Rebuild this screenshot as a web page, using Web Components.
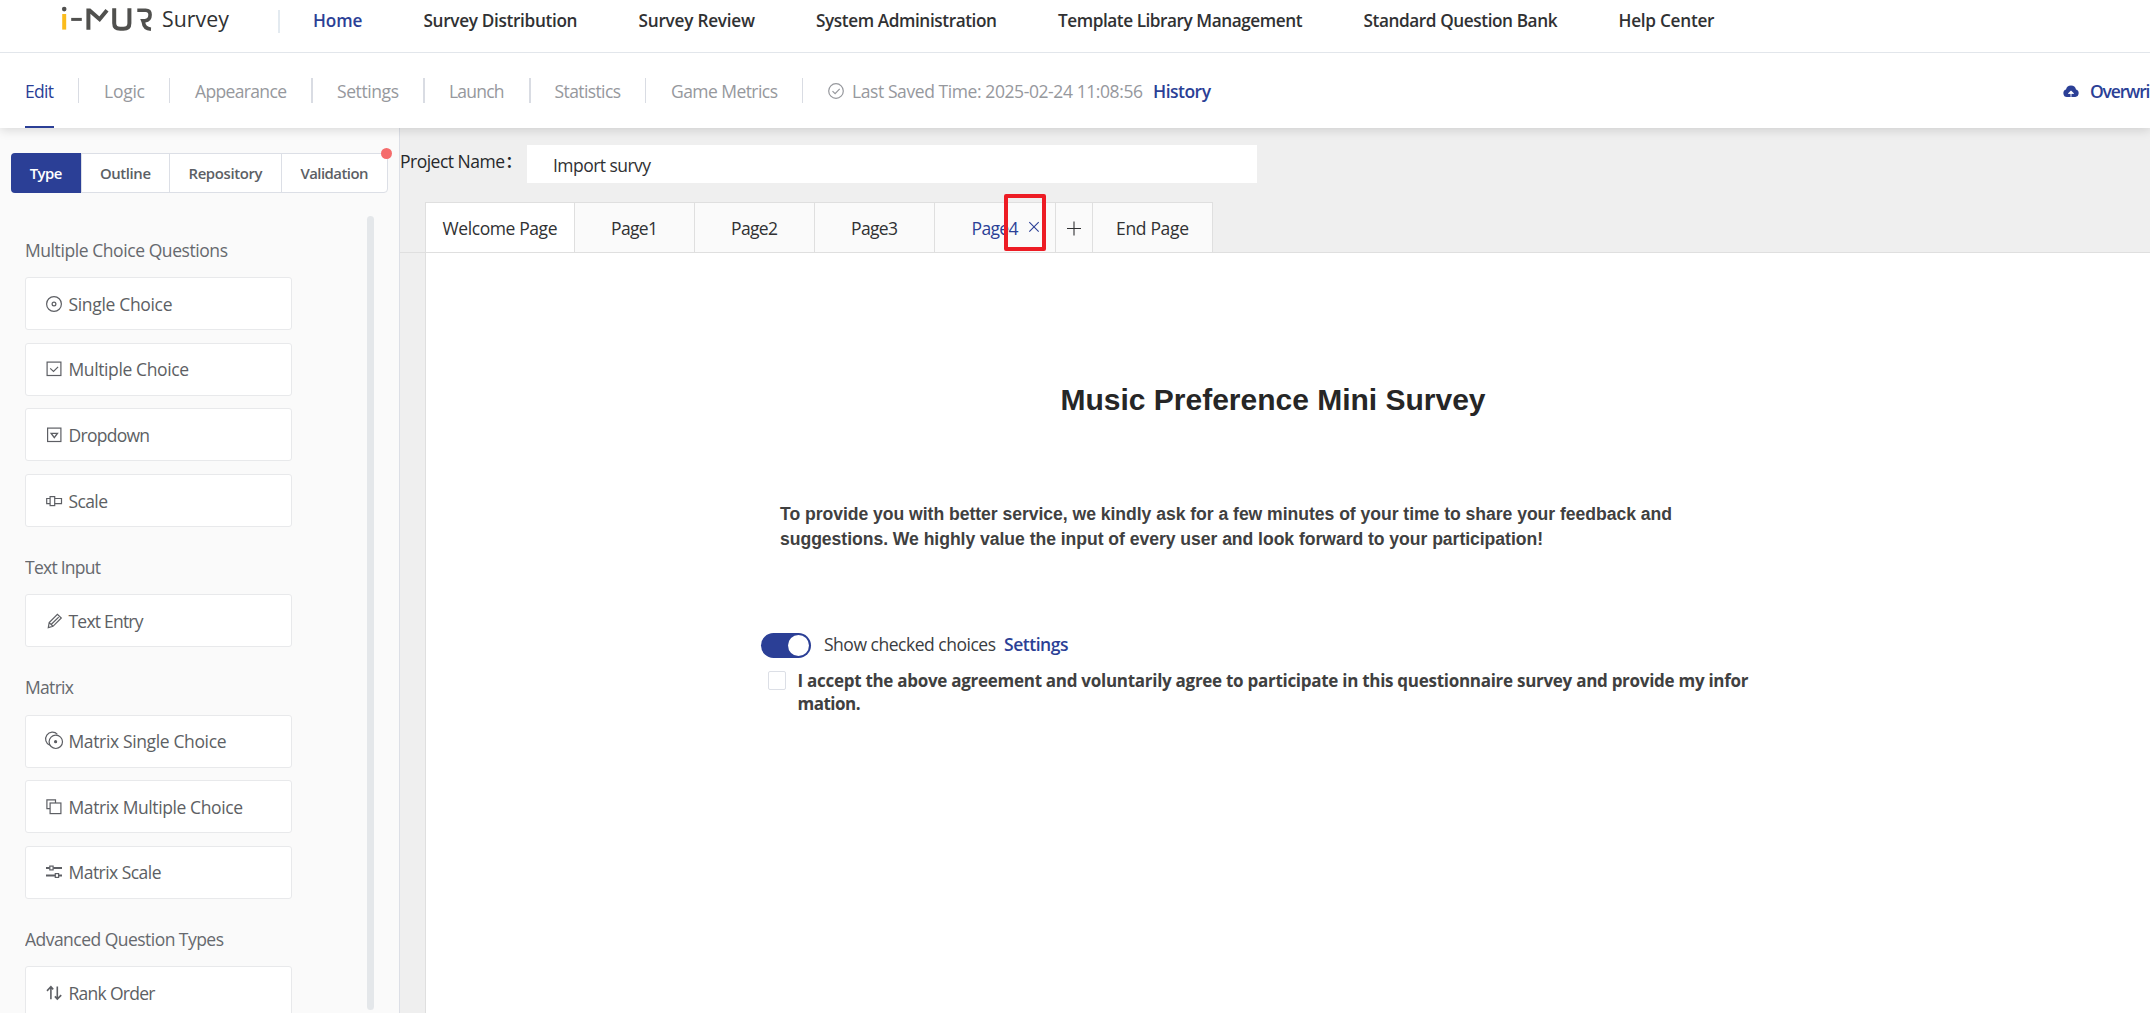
<!DOCTYPE html>
<html lang="en">
<head>
<meta charset="utf-8">
<title>i-MUR Survey</title>
<style>
html,body{margin:0;height:100%;overflow:hidden}
body{font-family:"Open Sans","Noto Sans CJK SC",sans-serif;font-size:17.5px;line-height:24px;color:#303133;background:#efefef;
--blue:#2b3f96;--muted:#96989d;--line:#dcdfe6}
</style>
</head>
<body>
<survey-app></survey-app>
<script>
const define=(name,html,setup)=>customElements.define(name,class extends HTMLElement{
  constructor(){super();this.attachShadow({mode:'open'}).innerHTML=html;}
  connectedCallback(){if(setup)setup(this,this.shadowRoot);}
});

/* A label that tracks its letters so the text fills the width given in "w". */
define('fit-text',`<style>:host{display:inline-block;white-space:nowrap;flex:none}span{display:inline-block}</style><span><slot></slot></span>`,(el,root)=>{
  const w=parseFloat(el.getAttribute('w')),s=root.querySelector('span'),n=el.textContent.length;
  el.style.width=w+'px';
  s.style.letterSpacing='0px';
  s.style.letterSpacing=((w-s.getBoundingClientRect().width)/(n-1||1))+'px';
});

const icons={
  single:'<circle cx="8" cy="8" r="7.4"/><circle cx="8" cy="8" r="1.9"/>',
  multiple:'<rect x="1.1" y="1.1" width="13.8" height="13.4"/><path d="M4.2 7.4l3.3 3 4.6-4.6"/>',
  dropdown:'<rect x="1.6" y="1.1" width="13.3" height="13.4"/><path d="M5.2 6.4h6.2L8.3 10.6z" stroke-width="1.4"/>',
  scale:'<path d="M4 5.5H.7v5.2H4M8.8 5.5h6.7v5.2H8.8"/><rect x="4.1" y="3.6" width="4.6" height="9"/>',
  pencil:'<path d="M2.3 14.6l.9-5L11.4 1.3l3.9 3.7L7 13.3zM3.2 9.6L7 13.3M5.1 11.5l7.6-7.4"/>',
  msingle:'<circle cx="9.8" cy="8.8" r="6.7"/><path d="M11.4 1.3A6.8 6.8 0 1 0 3.8 12.2"/><circle cx="9.6" cy="8.7" r="1" fill="currentColor"/>',
  mmultiple:'<path d="M4 9.6H.9V.9h8.6v3"/><rect x="4.1" y="4" width="10.8" height="10.6"/>',
  mscale:'<path d="M0 4.1h3.7M7.2 4.1H16M0 11.6h9.2M12.8 11.6H16" stroke-width="2"/><rect x="3.8" y="2.1" width="3.3" height="3.8"/><rect x="9.3" y="9.6" width="3.3" height="3.8"/>',
  rank:'<path d="M4.9 14.2V2M1 5.9L4.9 1.8 7.2 4.4M11.3 1.6v12.3M8.9 11.4l2.4 2.7 3.9-4" stroke-width="1.6"/>',
  saved:'<circle cx="8" cy="8" r="7.3"/><path d="M4.5 8.1l2.6 2.6 4.6-4.9"/>',
  plus:'<path d="M1 8.5h14M8 1.5v14" stroke-width="1.1"/>',
  close:'<path d="M3.3 3.2l9.4 9.4M12.7 3.2l-9.4 9.4" stroke-width="1.1"/>',
  cloud:'<path d="M3.9 14A3.8 3.8 0 0 1 3 6.6 5.1 5.1 0 0 1 13 6.6 3.8 3.8 0 0 1 12.3 14z" fill="currentColor" stroke="none"/><path d="M8 13.8V8.6M5.4 10.4L8 7.9l2.6 2.5z" stroke="#fff" fill="#fff" stroke-width=".9"/>'
};
define('ui-icon',`<style>:host{display:block;flex:none;width:16px;height:16px}svg{display:block;overflow:visible}</style>`,(el,root)=>{
  root.innerHTML+=`<svg width="16" height="16" viewBox="0 0 16 16" fill="none" stroke="currentColor" stroke-width="1.2">${icons[el.getAttribute('name')]}</svg>`;
});

define('brand-logo',`<style>
:host{display:flex;align-items:flex-start;color:#303133;font-size:21.3px;line-height:28px}
svg{display:block;margin-top:6px}
fit-text{margin:5px 0 0 9px}
</style>
<svg width="92" height="26" viewBox="0 0 92 26" fill="none" stroke="#50504e" stroke-width="4">
<circle cx="3.2" cy="3.1" r="2.3" fill="#50504e" stroke="none"/>
<path d="M3.2 8v15.6" stroke="#fbbc1c"/>
<path d="M10.2 13.4h10.6" stroke-width="3"/>
<path d="M27.4 23.7V4.6h1.2l10 8.6L46 4.3"/>
<path d="M53.2 2.2v15q0 5.5 6 5.5h3.2q6 0 6-5.5v-15"/>
<path d="M76.3 4.2h8.4q4.4 0 4.4 4.5 0 5.4-5 6.1h-2.2l.4 1q.7 7 7.7 7.5" stroke-width="3.6"/>
</svg><fit-text w="67">Survey</fit-text>`);

define('top-bar',`<style>
:host{display:flex;height:52px;border-bottom:1px solid #e2e6eb;background:#fff;box-sizing:content-box;padding-left:61px;align-items:flex-start;flex:none}
brand-logo{width:217px;flex:none}
i{width:2px;height:23px;background:#e3eaf0;margin-top:10px;flex:none}
nav{display:flex;gap:61px;margin:9px 0 0 33px;font-weight:600;font-size:17.2px}
.on{color:var(--blue)}
</style><brand-logo></brand-logo><i></i><nav>
<fit-text class="on" w="49.5">Home</fit-text><fit-text w="154">Survey Distribution</fit-text><fit-text w="116.5">Survey Review</fit-text><fit-text w="181">System Administration</fit-text><fit-text w="244.5">Template Library Management</fit-text><fit-text w="194">Standard Question Bank</fit-text><fit-text w="96">Help Center</fit-text></nav>`);

define('step-item',`<style>
:host{display:flex;height:75px;align-items:center;color:var(--muted);flex:none}
i{height:25px;width:1px;background:#d9dce3;margin:0 25px 0 24px}
:host([wide]) i{width:2px;margin-right:24px}
.t{display:flex;align-items:center;height:75px;padding-top:1px;box-sizing:border-box}
:host([on]){color:var(--blue)}
:host([on]) .t{border-bottom:2px solid var(--blue);padding-top:3px}
</style><div class="t"><slot></slot></div><i></i>`);

define('step-bar',`<style>
:host{display:flex;height:75px;background:#fff;box-shadow:0 2px 10px rgba(0,0,0,.14);clip-path:inset(0 0 -14px 0);z-index:2;position:relative;padding-left:25px;flex:none}
.save,.over{display:flex;align-items:center;color:var(--muted);padding-top:1px}
.save ui-icon{margin:0 8px 0 0}
.save .h{font-weight:600;color:var(--blue);margin-left:10px}
.over{margin-left:auto;color:var(--blue);font-weight:600;width:87px;overflow:hidden}
.over ui-icon{margin:0 11px 0 0}
</style>
<step-item on><fit-text w="29">Edit</fit-text></step-item>
<step-item><fit-text w="41">Logic</fit-text></step-item>
<step-item wide><fit-text w="92">Appearance</fit-text></step-item>
<step-item wide><fit-text w="62">Settings</fit-text></step-item>
<step-item wide><fit-text w="55.5">Launch</fit-text></step-item>
<step-item><fit-text w="66.5">Statistics</fit-text></step-item>
<step-item><fit-text w="107">Game Metrics</fit-text></step-item>
<div class="save"><ui-icon name="saved"></ui-icon><fit-text w="291">Last Saved Time: 2025-02-24 11:08:56</fit-text><fit-text class="h" w="58">History</fit-text></div>
<div class="over"><ui-icon name="cloud"></ui-icon><fit-text w="60.5">Overwri</fit-text></div>`);

define('panel-tabs',`<style>
:host{display:flex;width:377px;height:40px;box-sizing:border-box;border:1px solid var(--line);border-radius:4px;background:#fff;color:#5c5f65;font-size:14.9px;font-weight:600;position:relative}
div{display:flex;align-items:center;justify-content:center;border-left:1px solid var(--line);flex:1}
.a{background:var(--blue);color:#fff;flex:0 0 70px;border:0;margin:-1px 0 -1px -1px;border-radius:4px 0 0 4px}
.b{flex:0 0 87px}.c{flex:0 0 111px}
u{position:absolute;right:-5px;top:-6px;width:11px;height:11px;border-radius:50%;background:#f56c6c}
</style><div class="a"><fit-text w="32.5">Type</fit-text></div><div class="b"><fit-text w="51">Outline</fit-text></div><div class="c"><fit-text w="74">Repository</fit-text></div><div><fit-text w="68">Validation</fit-text></div><u></u>`);

define('type-group',`<style>
:host{display:flex;flex-direction:column;gap:12.6px;width:267px}
h3{margin:0 0 -12.6px;height:67.3px;box-sizing:border-box;padding-top:28px;font:inherit;color:#66696e}
</style><h3><slot name="title"></slot></h3><slot></slot>`);

define('type-card',`<style>
:host{display:flex;align-items:center;height:53px;box-sizing:border-box;border:1px solid #e8e9eb;border-radius:3px;background:#fff;color:#5d5f64;padding-left:20px;gap:6.5px;flex:none}
</style><ui-icon></ui-icon><slot></slot>`,(el,root)=>{
  const i=document.createElement('ui-icon');i.setAttribute('name',el.getAttribute('icon'));root.querySelector('ui-icon').replaceWith(i);
});

define('side-panel',`<style>
:host{display:flex;flex-direction:column;width:399px;border-right:1px solid var(--line);background:#fafafa;overflow:hidden;flex:none}
panel-tabs{margin:25px 0 0 11px;flex:none}
.row{display:flex;justify-content:space-between;padding:0 25px;margin-top:17px;min-height:0;flex:1}
.list{height:803px;overflow:hidden}
.bar{width:7px;height:794px;border-radius:4px;background:#e4e7ea;margin-top:6px}
</style><panel-tabs></panel-tabs><div class="row"><div class="list">
<type-group><fit-text slot="title" w="203">Multiple Choice Questions</fit-text>
<type-card icon="single"><fit-text w="104">Single Choice</fit-text></type-card>
<type-card icon="multiple"><fit-text w="120.5">Multiple Choice</fit-text></type-card>
<type-card icon="dropdown"><fit-text w="81.5">Dropdown</fit-text></type-card>
<type-card icon="scale"><fit-text w="39.5">Scale</fit-text></type-card></type-group>
<type-group><fit-text slot="title" w="76">Text Input</fit-text>
<type-card icon="pencil"><fit-text w="75">Text Entry</fit-text></type-card></type-group>
<type-group><fit-text slot="title" w="49">Matrix</fit-text>
<type-card icon="msingle"><fit-text w="158">Matrix Single Choice</fit-text></type-card>
<type-card icon="mmultiple"><fit-text w="174.5">Matrix Multiple Choice</fit-text></type-card>
<type-card icon="mscale"><fit-text w="93">Matrix Scale</fit-text></type-card></type-group>
<type-group><fit-text slot="title" w="199">Advanced Question Types</fit-text>
<type-card icon="rank"><fit-text w="87">Rank Order</fit-text></type-card></type-group>
</div><div class="bar"></div></div>`);

define('name-field',`<style>
:host{display:flex;height:38px;padding-top:17px}
label{padding-top:4px;width:127px;flex:none;white-space:nowrap;color:#26282b;display:flex;height:24px}
b{font:500 17.5px/24px "Noto Sans CJK SC",sans-serif}
div{width:704px;background:#fff;padding:8px 0 0 26px;height:30px;flex:none}
</style><label><fit-text w="105">Project Name</fit-text><b>：</b></label><div><fit-text w="98">Import survy</fit-text></div>`);

define('page-tab',`<style>
:host{display:flex;align-items:center;justify-content:center;box-sizing:border-box;height:51px;border:1px solid #dfdfdf;border-left:0;background:#fafafa;flex:none;width:120px;padding-top:1px;position:relative}
:host([on]){background:#fff}
:host([current]){color:var(--blue)}
</style><slot></slot>`);

define('page-tabs',`<style>
:host{display:flex;padding-left:25px;margin-top:19px;height:51px;border:0;background:linear-gradient(#dfdfdf,#dfdfdf) 0 100%/100% 1px no-repeat}
.w{width:150px;border-left:1px solid #dfdfdf}
.c{width:121px}.p{width:37px}
.x{position:absolute;right:13px;top:16px;width:16px;height:16px}
.mark{position:absolute;left:69px;top:-9px;width:34px;height:49px;border:4px solid #ed1c24;border-radius:2px}
</style>
<page-tab class="w" on><fit-text w="115">Welcome Page</fit-text></page-tab>
<page-tab><fit-text w="47">Page1</fit-text></page-tab>
<page-tab><fit-text w="47">Page2</fit-text></page-tab>
<page-tab><fit-text w="47">Page3</fit-text></page-tab>
<page-tab class="c" current><fit-text w="47">Page4</fit-text><ui-icon class="x" name="close"></ui-icon><span class="mark"></span></page-tab>
<page-tab class="p"><ui-icon name="plus"></ui-icon></page-tab>
<page-tab><fit-text w="73">End Page</fit-text></page-tab>`);

define('toggle-switch',`<style>
:host{display:flex;justify-content:flex-end;align-items:center;width:48px;height:25px;border-radius:13px;background:var(--blue);padding-right:2px}
i{width:21px;height:21px;border-radius:50%;background:#fff}
</style><i></i>`);

define('survey-page',`<style>
:host{display:flex;flex-direction:column;margin-left:25px;border-left:1px solid #dfdfdf;background:#fff;flex:1;padding-left:335px}
h1{margin:128px 0 0 299.5px;font:bold 30px/38px "Liberation Sans",Arial,sans-serif;color:#262626}
.p{margin:83px 0 0 19px;display:flex;flex-direction:column;font:bold 17.6px/25px "Liberation Sans",Arial,sans-serif;color:#404040}
.s{display:flex;align-items:center;margin-top:81px;height:25px;color:#3a3c40}
.s .t{margin:-3px 8px 0 13px}.s .l{margin-top:-3px;color:var(--blue);font-weight:600}
.a{display:flex;margin:11px 0 0 7px;gap:11.5px}
.a i{width:16px;height:17px;border:1px solid var(--line);border-radius:2px;flex:none;margin-top:2px}
.a div{display:flex;flex-direction:column;font-weight:700;font-size:17px;line-height:23px;color:#404040}
</style>
<h1><fit-text w="425">Music Preference Mini Survey</fit-text></h1>
<div class="p"><fit-text w="892">To provide you with better service, we kindly ask for a few minutes of your time to share your feedback and</fit-text><fit-text w="763">suggestions. We highly value the input of every user and look forward to your participation!</fit-text></div>
<div class="s"><toggle-switch></toggle-switch><fit-text class="t" w="172">Show checked choices</fit-text><fit-text class="l" w="64.5">Settings</fit-text></div>
<div class="a"><i></i><div><fit-text w="951">I accept the above agreement and voluntarily agree to participate in this questionnaire survey and provide my infor</fit-text><fit-text w="63">mation.</fit-text></div></div>`);

define('survey-app',`<style>
:host{display:flex;flex-direction:column;width:2150px;height:1013px;overflow:hidden}
.body{display:flex;flex:1;min-height:0}
main{display:flex;flex-direction:column;flex:1;background:#efefef}
</style><top-bar></top-bar><step-bar></step-bar><div class="body"><side-panel></side-panel><main><name-field></name-field><page-tabs></page-tabs><survey-page></survey-page></main></div>`);
</script>
</body>
</html>
